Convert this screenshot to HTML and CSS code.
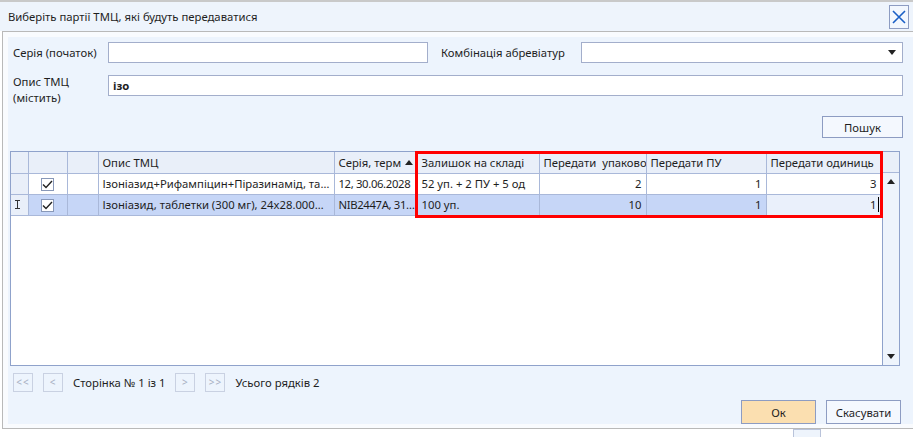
FILE: index.html
```html
<!DOCTYPE html>
<html lang="uk">
<head>
    <meta charset="UTF-8">
    <title>Виберіть партії ТМЦ</title>
    <link rel="stylesheet" href="styles.css">
</head>
<body>
    <div class="topline"></div>
    <div class="titlebar">
        <span class="title">Виберіть партії ТМЦ, які будуть передаватися</span>
        <button class="close-btn" type="button">
            <svg width="14" height="14" viewBox="0 0 14 14"><path d="M1 1 L13 13 M13 1 L1 13" stroke="#1a5fc6" stroke-width="1.6" fill="none"/></svg>
        </button>
    </div>

    <div class="frame">
        <div class="panel">
            <div class="form-row">
                <label class="lbl">Серія (початок)</label>
                <div class="field field-series"></div>
                <label class="lbl lbl-combo">Комбінація абревіатур</label>
                <div class="field combo">
                    <svg width="8" height="5" viewBox="0 0 8 5"><path d="M0 0 H8 L4 5 Z" fill="#222"/></svg>
                </div>
            </div>
            <div class="form-row form-row-desc">
                <label class="lbl">Опис ТМЦ<br>(містить)</label>
                <div class="field field-desc">ізо</div>
            </div>
            <div class="search-row">
                <button class="btn" type="button">Пошук</button>
            </div>

            <div class="grid">
                <table class="grid-table">
                    <thead>
                        <tr>
                            <th class="c-ind"></th>
                            <th class="c-chk"></th>
                            <th class="c-blank"></th>
                            <th class="c-desc">Опис ТМЦ</th>
                            <th class="c-ser sorted">Серія, терм <svg width="8" height="5" viewBox="0 0 8 5"><path d="M0 5 H8 L4 0 Z" fill="#222"/></svg></th>
                            <th class="c-stock">Залишок на складі</th>
                            <th class="c-pack">Передати&nbsp; упаковок</th>
                            <th class="c-pu">Передати ПУ</th>
                            <th class="c-unit">Передати одиниць</th>
                        </tr>
                    </thead>
                    <tbody>
                        <tr>
                            <td class="ind"></td>
                            <td class="chk"><span class="checkbox"><svg width="11" height="9" viewBox="0 0 11 9"><path d="M1 4.5 L4 7.5 L10 1" stroke="#222" stroke-width="1.4" fill="none"/></svg></span></td>
                            <td></td>
                            <td class="txt">Ізоніазид+Рифампіцин+Піразинамід, таблетки</td>
                            <td class="txt ser">12, 30.06.2028</td>
                            <td class="txt">52 уп. + 2 ПУ + 5 од</td>
                            <td class="num">2</td>
                            <td class="num">1</td>
                            <td class="num">3</td>
                        </tr>
                        <tr class="selected">
                            <td class="ind"><svg width="5" height="9" viewBox="0 0 5 9"><path d="M0 0.5 H5 M0 8.5 H5 M2.5 0.5 V8.5" stroke="#333" stroke-width="1" fill="none"/></svg></td>
                            <td class="chk"><span class="checkbox"><svg width="11" height="9" viewBox="0 0 11 9"><path d="M1 4.5 L4 7.5 L10 1" stroke="#222" stroke-width="1.4" fill="none"/></svg></span></td>
                            <td></td>
                            <td class="txt">Ізоніазид, таблетки (300 мг), 24x28.00000 шт</td>
                            <td class="txt ser">NIB2447A, 31.12.2027</td>
                            <td class="txt">100 уп.</td>
                            <td class="num">10</td>
                            <td class="num">1</td>
                            <td class="num editing">1<span class="caret"></span></td>
                        </tr>
                    </tbody>
                </table>
                <div class="scrollbar">
                    <div class="scroll-head"></div>
                    <div class="scroll-track">
                        <svg width="8" height="5" viewBox="0 0 8 5"><path d="M0 5 H8 L4 0 Z" fill="#222"/></svg>
                        <svg width="8" height="5" viewBox="0 0 8 5"><path d="M0 0 H8 L4 5 Z" fill="#222"/></svg>
                    </div>
                </div>
                <div class="highlight"></div>
            </div>

            <div class="pager">
                <span class="pg-btn">&lt;&lt;</span>
                <span class="pg-btn">&lt;</span>
                <span class="pg-text">Сторінка № 1 із 1</span>
                <span class="pg-btn">&gt;</span>
                <span class="pg-btn">&gt;&gt;</span>
                <span class="pg-text">Усього рядків 2</span>
            </div>

            <div class="actions">
                <button class="btn btn-ok" type="button">Ок</button>
                <button class="btn btn-cancel" type="button">Скасувати</button>
            </div>
        </div>
    </div>
    <div class="bottom-strip"><span class="stub"></span></div>
</body>
</html>
```

FILE: styles.css
```css
body {
    margin: 0;
    background-color: #ffffff;
    font-family: 'Noto Sans', 'Open Sans', sans-serif;
    font-size: 11.3px;
    color: #1e1e1e;
    overflow: hidden;
}
.topline {
    height: 2px;
    background-color: #c9c9c9;
}
.titlebar {
    height: 29px;
    background-color: #eef4fc;
    display: flex;
    align-items: center;
    justify-content: space-between;
    padding: 0 4px 0 8px;
}
.close-btn {
    width: 20px;
    height: 24px;
    padding: 0;
    border: 1px solid #8d9cc2;
    background-color: #f2f7fe;
    display: flex;
    align-items: center;
    justify-content: center;
}
.frame {
    margin-left: 2px;
    border: 1px solid #b9b9b9;
    border-right: none;
    padding: 5px 0 4px 5px;
    background-color: #f9fbfe;
}
.panel {
    background-color: #edf4fd;
    padding: 5px 10px 0 5px;
    height: 387px;
    box-sizing: border-box;
    display: flex;
    flex-direction: column;
}
.form-row {
    display: flex;
    align-items: center;
    height: 21px;
}
.form-row-desc {
    margin-top: 12px;
    align-items: flex-start;
}
.lbl {
    width: 95px;
    line-height: 16px;
    flex-shrink: 0;
}
.form-row-desc .lbl {
    margin-top: -1px;
}
.lbl-combo {
    width: 140px;
    margin-left: 13px;
}
.field {
    height: 21px;
    box-sizing: border-box;
    border: 1px solid #a3aecb;
    background-color: #ffffff;
}
.field-series {
    width: 320px;
}
.combo {
    flex: 1;
    display: flex;
    align-items: center;
    justify-content: flex-end;
    padding-right: 6px;
}
.field-desc {
    flex: 1;
    font-weight: bold;
    padding-left: 4px;
    line-height: 19px;
}
.search-row {
    display: flex;
    justify-content: flex-end;
    margin-top: 20px;
}
.btn {
    font-family: inherit;
    font-size: 11.3px;
    color: #1e1e1e;
    height: 22px;
    border: 1px solid #8d9cc2;
    background-color: #f4f8fe;
    padding: 0;
    cursor: pointer;
}
.search-row .btn {
    width: 81px;
}

/* grid */
.grid {
    position: relative;
    margin: 13px 3px 0 -3px;
    height: 217px;
    box-sizing: border-box;
    border: 1px solid #8fa2cb;
    background-color: #ffffff;
    display: flex;
}
.grid-table {
    width: 870px;
    flex-shrink: 0;
    table-layout: fixed;
    border-collapse: collapse;
    align-self: flex-start;
}
.grid-table th,
.grid-table td {
    box-sizing: border-box;
    height: 21px;
    padding: 0 4px;
    border-right: 1px solid #a9b8d9;
    border-bottom: 1px solid #a9b8d9;
    white-space: nowrap;
    overflow: hidden;
    font-weight: normal;
    text-align: left;
}
.grid-table th {
    background-color: #e9eff9;
    text-overflow: clip;
}
.c-ind { width: 17px; }
.c-chk { width: 39px; }
.c-blank { width: 31px; }
.c-desc { width: 236px; }
.c-ser { width: 83px; }
.c-stock { width: 122px; }
.c-pack { width: 107px; }
.c-pu { width: 120px; }
.c-unit { width: 115px; }
.grid-table th.sorted svg {
    margin-left: 1px;
    vertical-align: 2px;
}
.grid-table td.txt {
    text-overflow: ellipsis;
}
.grid-table td.ser {
    letter-spacing: -0.35px;
    padding-right: 1px;
}
.grid-table td.num {
    text-align: right;
}
.grid-table td.ind {
    background-color: #e9eff9;
    padding: 0 0 0 4px;
}
.grid-table td.chk {
    text-align: center;
    padding: 0;
}
.checkbox {
    display: inline-flex;
    width: 13px;
    height: 13px;
    box-sizing: border-box;
    border: 1px solid #8898b8;
    background-color: #ffffff;
    align-items: center;
    justify-content: center;
    vertical-align: middle;
}
.selected td {
    background-color: #c6d6f7;
}
.selected td.editing {
    background-color: #eaf0fb;
    padding-right: 2px;
}
.caret {
    display: inline-block;
    width: 1px;
    height: 15px;
    background-color: #000;
    margin-left: 1px;
    vertical-align: -3px;
}
.scrollbar {
    flex: 1;
    display: flex;
    flex-direction: column;
    border-left: 1px solid #8fa2cb;
}
.scroll-head {
    height: 20px;
    border-bottom: 1px solid #a9b8d9;
    background-color: #e9eff9;
}
.scroll-track {
    flex: 1;
    background-color: #eef4fc;
    display: flex;
    flex-direction: column;
    align-items: center;
    justify-content: space-between;
    padding: 6px 0 6px;
}
.highlight {
    position: absolute;
    left: 404px;
    top: -1px;
    width: 468px;
    height: 67px;
    box-sizing: border-box;
    border: 3px solid #ff0000;
}

/* pager */
.pager {
    display: flex;
    align-items: center;
    margin-top: 6px;
    height: 20px;
}
.pg-btn {
    width: 20px;
    height: 19px;
    box-sizing: border-box;
    border: 1px solid #c9d1e2;
    color: #a7afc2;
    font-size: 10px;
    letter-spacing: 1px;
    display: flex;
    align-items: center;
    justify-content: center;
    margin-right: 10px;
}
.pg-text {
    margin-right: 10px;
}

.actions {
    display: flex;
    justify-content: flex-end;
    gap: 10px;
    margin-top: 8px;
    padding-right: 2px;
}
.actions .btn {
    width: 75px;
    height: 24px;
}
.btn-ok {
    background-color: #fbdfb0;
}
.bottom-strip {
    height: 10px;
    position: relative;
}
.stub {
    position: absolute;
    left: 793px;
    top: 0;
    width: 28px;
    height: 10px;
    box-sizing: border-box;
    border: 1px solid #b9c3da;
    background-color: #eef4fc;
}
```
